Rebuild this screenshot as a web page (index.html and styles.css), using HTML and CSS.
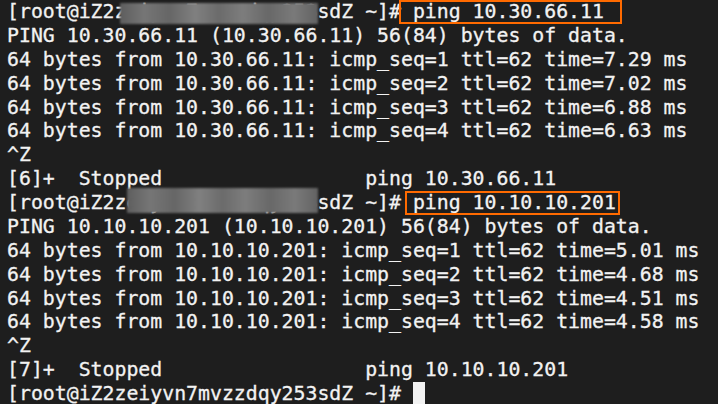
FILE: index.html
```html
<!DOCTYPE html>
<html>
<head>
<meta charset="utf-8">
<link rel="stylesheet" href="styles.css">
</head>
<body>
<div class="term">
<div class="line">[root@iZ2zeiyvn7mvzzdqy253sdZ ~]# ping 10.30.66.11</div>
<div class="line">PING 10.30.66.11 (10.30.66.11) 56(84) bytes of data.</div>
<div class="line">64 bytes from 10.30.66.11: icmp_seq=1 ttl=62 time=7.29 ms</div>
<div class="line">64 bytes from 10.30.66.11: icmp_seq=2 ttl=62 time=7.02 ms</div>
<div class="line">64 bytes from 10.30.66.11: icmp_seq=3 ttl=62 time=6.88 ms</div>
<div class="line">64 bytes from 10.30.66.11: icmp_seq=4 ttl=62 time=6.63 ms</div>
<div class="line">^Z</div>
<div class="line">[6]+  Stopped                 ping 10.30.66.11</div>
<div class="line">[root@iZ2zeiyvn7mvzzdqy253sdZ ~]# ping 10.10.10.201</div>
<div class="line">PING 10.10.10.201 (10.10.10.201) 56(84) bytes of data.</div>
<div class="line">64 bytes from 10.10.10.201: icmp_seq=1 ttl=62 time=5.01 ms</div>
<div class="line">64 bytes from 10.10.10.201: icmp_seq=2 ttl=62 time=4.68 ms</div>
<div class="line">64 bytes from 10.10.10.201: icmp_seq=3 ttl=62 time=4.51 ms</div>
<div class="line">64 bytes from 10.10.10.201: icmp_seq=4 ttl=62 time=4.58 ms</div>
<div class="line">^Z</div>
<div class="line">[7]+  Stopped                 ping 10.10.10.201</div>
<div class="line">[root@iZ2zeiyvn7mvzzdqy253sdZ ~]# <span class="cursor"> </span></div>

<div class="mask mask-1"></div>
<div class="mask mask-2"></div>
<div class="hl hl-1"></div>
<div class="hl hl-2"></div>
</div>
</body>
</html>
```

FILE: styles.css
```css
html, body {
  margin: 0;
  padding: 0;
  background: #1e1e1e;
}

.term {
  position: relative;
  width: 718px;
  height: 404px;
  overflow: hidden;
  box-sizing: border-box;
  padding: 0 0 0 7px;
  background: #1e1e1e;
  color: #f2f2f2;
  font-family: "DejaVu Sans Mono", "Liberation Mono", monospace;
  font-size: 19.83px;
  line-height: 23.875px;
  -webkit-text-stroke: 0.3px #f2f2f2;
}

.line {
  white-space: pre;
  height: 23.875px;
}

.cursor {
  display: inline-block;
  width: 12px;
  height: 23px;
  background: #f2f2f2;
  vertical-align: top;
}

.mask {
  position: absolute;
  background: linear-gradient(90deg, #5e5e5e 0%, #767676 12%, #666666 25%, #808080 38%, #6b6b6b 50%, #7d7d7d 62%, #686868 75%, #7a7a7a 88%, #626262 100%);
  filter: blur(1px);
}

.mask-1 {
  left: 120px;
  top: 3px;
  width: 198px;
  height: 21px;
}

.mask-2 {
  left: 127px;
  top: 188px;
  width: 191px;
  height: 25px;
}

.hl {
  position: absolute;
  box-sizing: border-box;
  border: 2px solid #ff6a00;
}

.hl-1 {
  left: 399px;
  top: 0;
  width: 223px;
  height: 24px;
}

.hl-2 {
  left: 405px;
  top: 191px;
  width: 215px;
  height: 24px;
}
```
